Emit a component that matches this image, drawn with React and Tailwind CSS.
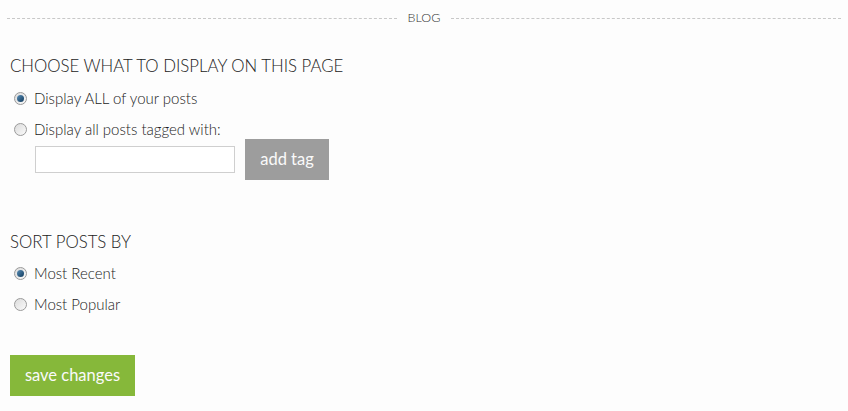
import React from 'react';

const Radio = ({ checked }) => (
  <span className="relative flex h-[13px] w-[13px] items-center justify-center rounded-full border border-[#9a9a9a] bg-gradient-to-br from-[#dcdcdc] to-[#fafafa]">
    {checked && (
      <span className="h-[7px] w-[7px] rounded-full bg-gradient-to-br from-[#5a8fb8] to-[#0e3a5c]" />
    )}
  </span>
);

const Option = ({ label, checked }) => (
  <label className="flex h-[31px] items-center gap-[7px] pl-[14px] text-[15px] font-light text-[#222]">
    <Radio checked={checked} />
    <span>{label}</span>
  </label>
);

export default function App() {
  return (
    <div className="min-h-[411px] w-[848px] bg-[#fdfdfd] font-['Lato','Liberation_Sans',sans-serif]">
      {/* Section divider */}
      <div className="flex h-9 items-center gap-[11px] px-[7px]">
        <div className="flex-1 border-t border-dashed border-[#c8c8c8]" />
        <span className="text-[12.5px] font-light text-[#333]">BLOG</span>
        <div className="flex-1 border-t border-dashed border-[#c8c8c8]" />
      </div>

      <div className="px-[10px]">
        <h2 className="mt-5 h-5 text-[16.8px] font-light leading-5 text-[#222]">CHOOSE WHAT TO DISPLAY ON THIS PAGE</h2>
      </div>
      <div className="mt-[7px]">
        <Option label="Display ALL of your posts" checked />
        <Option label="Display all posts tagged with:" />
        <div className="-mt-1.5 flex items-center gap-[10px] pl-[35px]">
          <input type="text" className="h-[27px] w-[200px] border border-[#cfcfcf] bg-white outline-none" />
          <button className="h-[41px] w-[84px] bg-[#9d9d9d] text-[16.5px] text-[#fafafa]">add tag</button>
        </div>
      </div>

      <div className="px-[10px]">
        <h2 className="mt-[52px] h-5 text-[16.8px] font-light leading-5 text-[#222]">SORT POSTS BY</h2>
      </div>
      <div className="mt-[6px]">
        <Option label="Most Recent" checked />
        <Option label="Most Popular" />
      </div>

      <div className="px-[10px] pt-[35px]">
        <button className="h-[41px] w-[125px] bg-[#86b83a] text-[16.5px] text-[#fafafa]">save changes</button>
      </div>
    </div>
  );
}
